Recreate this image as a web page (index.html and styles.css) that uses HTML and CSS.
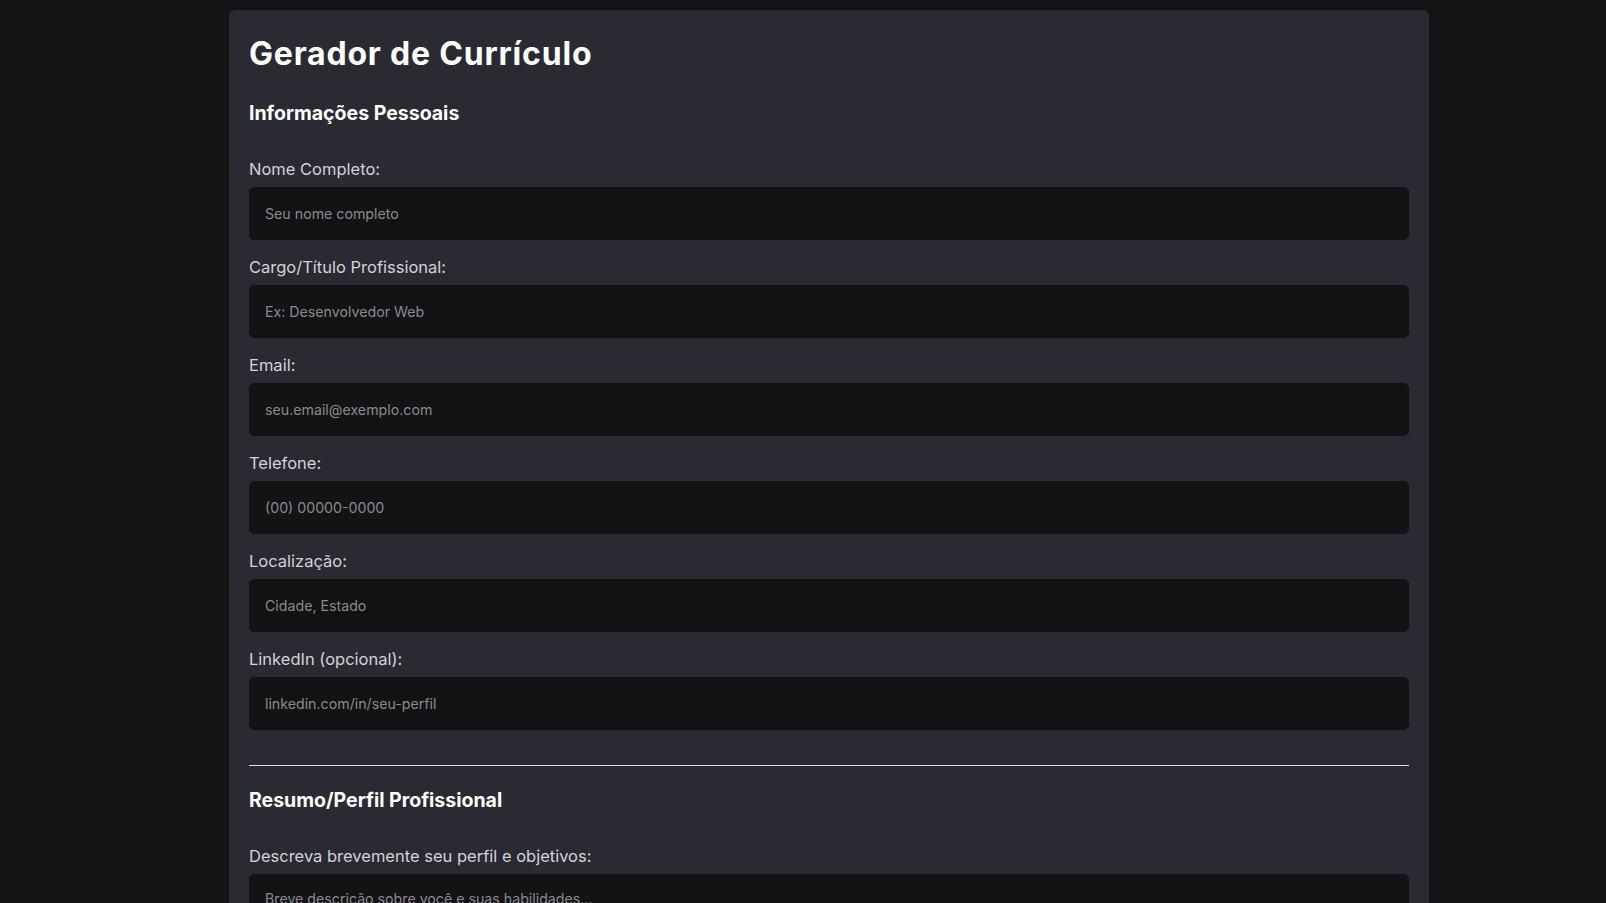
FILE: index.html
```html
<!DOCTYPE html>
<html lang="pt-BR">
<head>
<meta charset="utf-8">
<title>Gerador de Currículo</title>
<link rel="stylesheet" href="styles.css">
</head>
<body>
<main class="container">
  <h1 class="title">Gerador de Currículo</h1>

  <section class="section">
    <h2 class="section-title">Informações Pessoais</h2>
    <div class="field">
      <label class="field-label" for="nome">Nome Completo:</label>
      <input class="field-input" id="nome" type="text" placeholder="Seu nome completo">
    </div>
    <div class="field">
      <label class="field-label" for="cargo">Cargo/Título Profissional:</label>
      <input class="field-input" id="cargo" type="text" placeholder="Ex: Desenvolvedor Web">
    </div>
    <div class="field">
      <label class="field-label" for="email">Email:</label>
      <input class="field-input" id="email" type="email" placeholder="seu.email@exemplo.com">
    </div>
    <div class="field">
      <label class="field-label" for="telefone">Telefone:</label>
      <input class="field-input" id="telefone" type="tel" placeholder="(00) 00000-0000">
    </div>
    <div class="field">
      <label class="field-label" for="local">Localização:</label>
      <input class="field-input" id="local" type="text" placeholder="Cidade, Estado">
    </div>
    <div class="field">
      <label class="field-label" for="linkedin">LinkedIn (opcional):</label>
      <input class="field-input" id="linkedin" type="text" placeholder="linkedin.com/in/seu-perfil">
    </div>
  </section>

  <hr class="divider">

  <section class="section">
    <h2 class="section-title">Resumo/Perfil Profissional</h2>
    <div class="field">
      <label class="field-label" for="resumo">Descreva brevemente seu perfil e objetivos:</label>
      <textarea class="field-input field-textarea" id="resumo" placeholder="Breve descrição sobre você e suas habilidades..."></textarea>
    </div>
  </section>
</main>
</body>
</html>
```

FILE: styles.css
```css
html, body {
  margin: 0;
  padding: 0;
  background: #141417;
}

body {
  font-family: "Inter", "Noto Sans", sans-serif;
  color: #d2d2da;
}

.container {
  box-sizing: border-box;
  width: 1200px;
  margin: 10px 0 0 229px;
  padding: 20px 20px 40px;
  background: #2a2a33;
  border-radius: 6px;
  min-height: 1200px;
}

.title {
  margin: 0 0 20px;
  font-size: 32px;
  line-height: 48px;
  font-weight: 700;
  letter-spacing: 0.8px;
  color: #ffffff;
}

.section-title {
  margin: 0 0 29px;
  font-size: 19.5px;
  line-height: 30px;
  font-weight: 700;
  color: #ffffff;
}

.field {
  display: flex;
  flex-direction: column;
  margin-bottom: 15px;
}

.field-label {
  font-size: 16.5px;
  line-height: 24px;
  margin-bottom: 6px;
  color: #d2d2da;
}

.field-input {
  box-sizing: border-box;
  height: 53px;
  padding: 0 15px;
  background: #131316;
  border: 1px solid #131316;
  border-radius: 5px;
  font-family: inherit;
  font-size: 14.2px;
  color: #e0e0e0;
  outline: none;
}

.field-input::placeholder {
  color: #8a8a8e;
}

.field-textarea {
  height: 120px;
  padding: 15px;
  resize: vertical;
}

.divider {
  border: 0;
  border-top: 1px solid #dcdce0;
  margin: 35px 0 19px;
}
```
